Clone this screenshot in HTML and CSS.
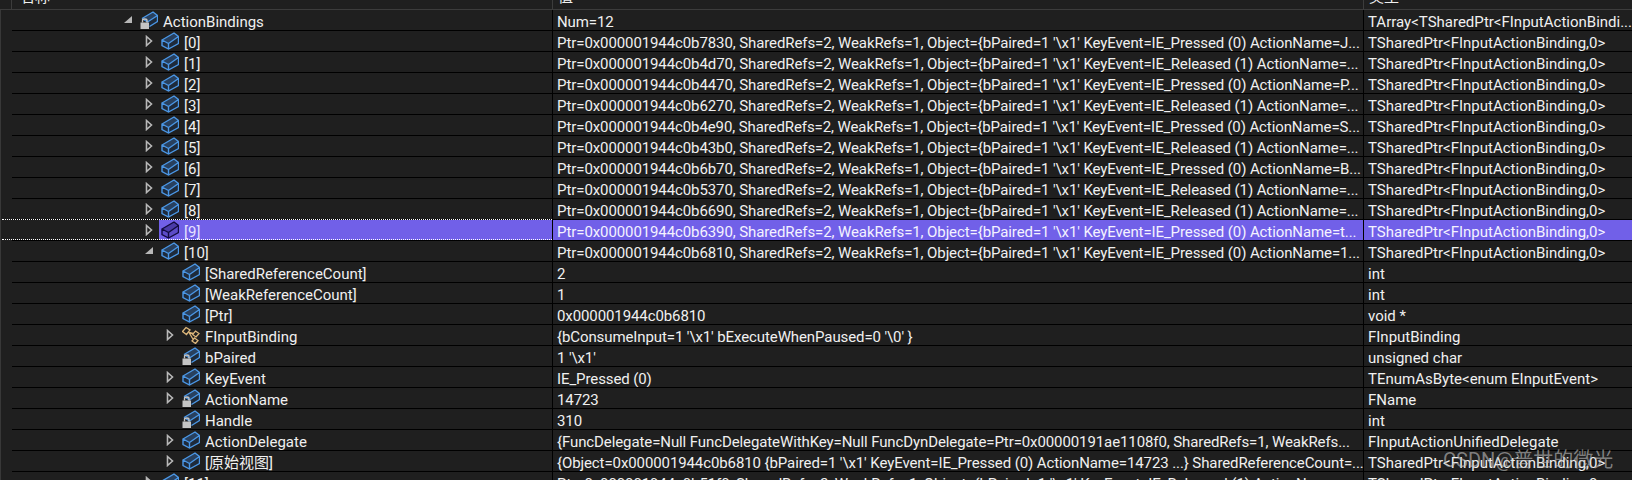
FILE: index.html
```html
<!DOCTYPE html>
<html lang="zh">
<head>
<meta charset="utf-8">
<title>Watch</title>
<link rel="stylesheet" href="styles.css">
</head>
<body>
<svg class="defs" width="0" height="0" aria-hidden="true">
  <symbol id="cube" viewBox="0 0 18 18">
    <path class="c-top" d="M1 8 13 1 17.500 4.500 7.500 11.500Z"/>
    <path class="c-side" d="M1 8 7.500 11.500V17L1 13.500ZM7.500 11.500 17.500 4.500V11.500L7.500 17Z"/>
    <path class="c-line" d="M1 8 13 1 17.500 4.500V11.500L7.500 17 1 13.500ZM1 8 7.500 11.500 17.500 4.500M7.500 11.500V17"/>
  </symbol>
  <symbol id="cube-sel" viewBox="0 0 18 18">
    <path class="s-top" d="M1 8 13 1 17.500 4.500 7.500 11.500Z"/>
    <path class="s-side" d="M1 8 7.500 11.500V17L1 13.500ZM7.500 11.500 17.500 4.500V11.500L7.500 17Z"/>
    <path class="s-line" d="M1 8 13 1 17.500 4.500V11.500L7.500 17 1 13.500ZM1 8 7.500 11.500 17.500 4.500M7.500 11.500V17"/>
  </symbol>
  <symbol id="lockcube" viewBox="0 0 18 18">
    <path class="c-top" d="M2 7.500 13 1 17.500 4.500 7.500 11Z"/>
    <path class="c-side" d="M9 10.500 17.500 4.500V10.500L9 15.500Z"/>
    <path class="c-line" d="M2 7.500 13 1 17.500 4.500V10.500L9.500 15.500M2 7.500 7.500 11 17.500 4.500"/>
    <path class="c-lock" d="M.5 11.500H9V18H.5Z"/>
    <path class="c-shackle" d="M2.500 11.500V9.500C2.500 7.500 7 7.500 7 9.500V11.500"/>
  </symbol>
  <symbol id="cls" viewBox="0 0 18 18">
    <path class="k-line" d="M4 1.500 8 4 4.500 8.500.5 5.500ZM13.500 5 17 7.500 14 11 10.500 8.500ZM12.500 12 16 14.500 13.500 17.500 10 15ZM7 6.500 11 7.500M7 6.500 11.500 14"/>
  </symbol>
  <symbol id="col" viewBox="0 0 8 12">
    <path class="a-col" d="M1.500 1.500 6.500 6 1.500 10.500Z"/>
  </symbol>
  <symbol id="exp" viewBox="0 0 8 12">
    <path class="a-exp" d="M8 2V9H0Z"/>
  </symbol>
</svg>

<div class="header">
  <div class="hcell hname">名称</div>
  <div class="hcell hval">值</div>
  <div class="hcell htype">类型</div>
</div>

<div class="tree">
  <div class="row">
    <div class="name l1"><svg class="arrow"><use href="#exp"/></svg><svg class="ico"><use href="#lockcube"/></svg><span>ActionBindings</span></div>
    <div class="val">Num=12</div>
    <div class="type">TArray&lt;TSharedPtr&lt;FInputActionBindi...</div>
  </div>
  <div class="row">
    <div class="name l2"><svg class="arrow"><use href="#col"/></svg><svg class="ico"><use href="#cube"/></svg><span>[0]</span></div>
    <div class="val">Ptr=0x000001944c0b7830, SharedRefs=2, WeakRefs=1, Object={bPaired=1 '\x1' KeyEvent=IE_Pressed (0) ActionName=J...</div>
    <div class="type">TSharedPtr&lt;FInputActionBinding,0&gt;</div>
  </div>
  <div class="row">
    <div class="name l2"><svg class="arrow"><use href="#col"/></svg><svg class="ico"><use href="#cube"/></svg><span>[1]</span></div>
    <div class="val">Ptr=0x000001944c0b4d70, SharedRefs=2, WeakRefs=1, Object={bPaired=1 '\x1' KeyEvent=IE_Released (1) ActionName=...</div>
    <div class="type">TSharedPtr&lt;FInputActionBinding,0&gt;</div>
  </div>
  <div class="row">
    <div class="name l2"><svg class="arrow"><use href="#col"/></svg><svg class="ico"><use href="#cube"/></svg><span>[2]</span></div>
    <div class="val">Ptr=0x000001944c0b4470, SharedRefs=2, WeakRefs=1, Object={bPaired=1 '\x1' KeyEvent=IE_Pressed (0) ActionName=P...</div>
    <div class="type">TSharedPtr&lt;FInputActionBinding,0&gt;</div>
  </div>
  <div class="row">
    <div class="name l2"><svg class="arrow"><use href="#col"/></svg><svg class="ico"><use href="#cube"/></svg><span>[3]</span></div>
    <div class="val">Ptr=0x000001944c0b6270, SharedRefs=2, WeakRefs=1, Object={bPaired=1 '\x1' KeyEvent=IE_Released (1) ActionName=...</div>
    <div class="type">TSharedPtr&lt;FInputActionBinding,0&gt;</div>
  </div>
  <div class="row">
    <div class="name l2"><svg class="arrow"><use href="#col"/></svg><svg class="ico"><use href="#cube"/></svg><span>[4]</span></div>
    <div class="val">Ptr=0x000001944c0b4e90, SharedRefs=2, WeakRefs=1, Object={bPaired=1 '\x1' KeyEvent=IE_Pressed (0) ActionName=S...</div>
    <div class="type">TSharedPtr&lt;FInputActionBinding,0&gt;</div>
  </div>
  <div class="row">
    <div class="name l2"><svg class="arrow"><use href="#col"/></svg><svg class="ico"><use href="#cube"/></svg><span>[5]</span></div>
    <div class="val">Ptr=0x000001944c0b43b0, SharedRefs=2, WeakRefs=1, Object={bPaired=1 '\x1' KeyEvent=IE_Released (1) ActionName=...</div>
    <div class="type">TSharedPtr&lt;FInputActionBinding,0&gt;</div>
  </div>
  <div class="row">
    <div class="name l2"><svg class="arrow"><use href="#col"/></svg><svg class="ico"><use href="#cube"/></svg><span>[6]</span></div>
    <div class="val">Ptr=0x000001944c0b6b70, SharedRefs=2, WeakRefs=1, Object={bPaired=1 '\x1' KeyEvent=IE_Pressed (0) ActionName=B...</div>
    <div class="type">TSharedPtr&lt;FInputActionBinding,0&gt;</div>
  </div>
  <div class="row">
    <div class="name l2"><svg class="arrow"><use href="#col"/></svg><svg class="ico"><use href="#cube"/></svg><span>[7]</span></div>
    <div class="val">Ptr=0x000001944c0b5370, SharedRefs=2, WeakRefs=1, Object={bPaired=1 '\x1' KeyEvent=IE_Released (1) ActionName=...</div>
    <div class="type">TSharedPtr&lt;FInputActionBinding,0&gt;</div>
  </div>
  <div class="row">
    <div class="name l2"><svg class="arrow"><use href="#col"/></svg><svg class="ico"><use href="#cube"/></svg><span>[8]</span></div>
    <div class="val">Ptr=0x000001944c0b6690, SharedRefs=2, WeakRefs=1, Object={bPaired=1 '\x1' KeyEvent=IE_Released (1) ActionName=...</div>
    <div class="type">TSharedPtr&lt;FInputActionBinding,0&gt;</div>
  </div>
  <div class="row selected">
    <div class="name l2"><svg class="arrow"><use href="#col"/></svg><div class="selbar"><svg class="ico"><use href="#cube-sel"/></svg><span>[9]</span></div></div>
    <div class="val">Ptr=0x000001944c0b6390, SharedRefs=2, WeakRefs=1, Object={bPaired=1 '\x1' KeyEvent=IE_Pressed (0) ActionName=t...</div>
    <div class="type">TSharedPtr&lt;FInputActionBinding,0&gt;</div>
  </div>
  <div class="row">
    <div class="name l2"><svg class="arrow"><use href="#exp"/></svg><svg class="ico"><use href="#cube"/></svg><span>[10]</span></div>
    <div class="val">Ptr=0x000001944c0b6810, SharedRefs=2, WeakRefs=1, Object={bPaired=1 '\x1' KeyEvent=IE_Pressed (0) ActionName=1...</div>
    <div class="type">TSharedPtr&lt;FInputActionBinding,0&gt;</div>
  </div>
  <div class="row">
    <div class="name l3"><span class="arrow"></span><svg class="ico"><use href="#cube"/></svg><span>[SharedReferenceCount]</span></div>
    <div class="val">2</div>
    <div class="type">int</div>
  </div>
  <div class="row">
    <div class="name l3"><span class="arrow"></span><svg class="ico"><use href="#cube"/></svg><span>[WeakReferenceCount]</span></div>
    <div class="val">1</div>
    <div class="type">int</div>
  </div>
  <div class="row">
    <div class="name l3"><span class="arrow"></span><svg class="ico"><use href="#cube"/></svg><span>[Ptr]</span></div>
    <div class="val">0x000001944c0b6810</div>
    <div class="type">void *</div>
  </div>
  <div class="row">
    <div class="name l3"><svg class="arrow"><use href="#col"/></svg><svg class="ico"><use href="#cls"/></svg><span>FInputBinding</span></div>
    <div class="val">{bConsumeInput=1 '\x1' bExecuteWhenPaused=0 '\0' }</div>
    <div class="type">FInputBinding</div>
  </div>
  <div class="row">
    <div class="name l3"><span class="arrow"></span><svg class="ico"><use href="#lockcube"/></svg><span>bPaired</span></div>
    <div class="val">1 '\x1'</div>
    <div class="type">unsigned char</div>
  </div>
  <div class="row">
    <div class="name l3"><svg class="arrow"><use href="#col"/></svg><svg class="ico"><use href="#cube"/></svg><span>KeyEvent</span></div>
    <div class="val">IE_Pressed (0)</div>
    <div class="type">TEnumAsByte&lt;enum EInputEvent&gt;</div>
  </div>
  <div class="row">
    <div class="name l3"><svg class="arrow"><use href="#col"/></svg><svg class="ico"><use href="#lockcube"/></svg><span>ActionName</span></div>
    <div class="val">14723</div>
    <div class="type">FName</div>
  </div>
  <div class="row">
    <div class="name l3"><span class="arrow"></span><svg class="ico"><use href="#lockcube"/></svg><span>Handle</span></div>
    <div class="val">310</div>
    <div class="type">int</div>
  </div>
  <div class="row">
    <div class="name l3"><svg class="arrow"><use href="#col"/></svg><svg class="ico"><use href="#cube"/></svg><span>ActionDelegate</span></div>
    <div class="val">{FuncDelegate=Null FuncDelegateWithKey=Null FuncDynDelegate=Ptr=0x00000191ae1108f0, SharedRefs=1, WeakRefs...</div>
    <div class="type">FInputActionUnifiedDelegate</div>
  </div>
  <div class="row">
    <div class="name l3"><svg class="arrow"><use href="#col"/></svg><svg class="ico"><use href="#cube"/></svg><span>[原始视图]</span></div>
    <div class="val">{Object=0x000001944c0b6810 {bPaired=1 '\x1' KeyEvent=IE_Pressed (0) ActionName=14723 ...} SharedReferenceCount=...</div>
    <div class="type">TSharedPtr&lt;FInputActionBinding,0&gt;</div>
  </div>
  <div class="row">
    <div class="name l2"><svg class="arrow"><use href="#col"/></svg><svg class="ico"><use href="#cube"/></svg><span>[11]</span></div>
    <div class="val">Ptr=0x000001944c0b51f0, SharedRefs=2, WeakRefs=1, Object={bPaired=1 '\x1' KeyEvent=IE_Released (1) ActionName=...</div>
    <div class="type">TSharedPtr&lt;FInputActionBinding,0&gt;</div>
  </div>
</div>

<div class="watermark">CSDN@普世的微光</div>
</body>
</html>
```

FILE: styles.css
```css
html, body {
  margin: 0;
  padding: 0;
  height: 480px;
  overflow: hidden;
  background: #1f1f1f;
}

body {
  position: relative;
  color: #f0f0f0;
  font-family: "Roboto", "Noto Sans CJK SC", sans-serif;
  font-size: 15px;
}

.defs {
  position: absolute;
}

.header {
  display: grid;
  grid-template-columns: 552px 811px 1fr;
  height: 10px;
  box-sizing: border-box;
  border-bottom: 1px solid #3c3c3c;
  overflow: hidden;
}

.hcell {
  display: flex;
  align-items: flex-end;
  height: 9px;
  padding-bottom: 2px;
  box-sizing: border-box;
  line-height: 20px;
  white-space: nowrap;
}

.hname {
  margin-left: 11px;
  padding-left: 8px;
  border-left: 1px solid #3c3c3c;
}

.hval,
.htype {
  padding-left: 5px;
  border-left: 1px solid #3c3c3c;
}

.tree {
  border-left: 1px solid #383838;
}

.row {
  position: relative;
  display: grid;
  grid-template-columns: 540px 811px 1fr;
  height: 21px;
  box-sizing: border-box;
  margin-left: 11px;
  border-bottom: 1px solid #000;
  line-height: 20px;
  white-space: nowrap;
}

.name {
  display: flex;
  align-items: center;
  height: 20px;
}

.name span {
  padding-top: 4px;
}

.l1 { padding-left: 112px; }
.l2 { padding-left: 133px; }
.l3 { padding-left: 154px; }

.arrow {
  flex: none;
  width: 8px;
  height: 12px;
  margin-right: 8px;
  padding: 0;
}

.ico {
  flex: none;
  width: 18px;
  height: 18px;
  margin-right: 5px;
}

.val,
.type {
  height: 20px;
  box-sizing: border-box;
  padding-top: 2px;
  padding-left: 4px;
  border-left: 1px solid #000;
  overflow: hidden;
}

.val {
  letter-spacing: -0.1px;
}

.selected .name {
  position: relative;
}

.selected .name::before {
  content: "";
  position: absolute;
  left: -10px;
  right: 0;
  top: -1px;
  bottom: 0;
  border-top: 1px dotted #fff;
  border-bottom: 1px dotted #fff;
}

.selbar {
  display: flex;
  align-items: center;
  flex: 1;
  align-self: stretch;
  margin-left: -2px;
  padding-left: 2px;
  background: #7160e8;
  color: #e6e2ff;
}

.selected .val,
.selected .type {
  background: #7160e8;
  color: #f4f2ff;
}

.c-top { fill: #28405e; }
.c-side { fill: #1e2a3a; }
.c-line {
  fill: none;
  stroke: #4b97e6;
  stroke-width: 1.4;
}
.s-top { fill: #4a3ba8; }
.s-side { fill: #5c4cc8; }
.s-line {
  fill: none;
  stroke: #120a40;
  stroke-width: 1.4;
}
.c-lock { fill: #c4c4c4; }
.c-shackle {
  fill: none;
  stroke: #c4c4c4;
  stroke-width: 1.4;
}
.k-line {
  fill: none;
  stroke: #dcb67a;
  stroke-width: 1.3;
}
.a-col {
  fill: #1f1f1f;
  stroke: #b8b8b8;
  stroke-width: 1.6;
}
.a-exp { fill: #b8b8b8; }

.watermark {
  position: absolute;
  left: 1443px;
  top: 447px;
  font-size: 20px;
  line-height: 26px;
  color: rgba(190, 190, 190, 0.62);
  white-space: nowrap;
}
```
